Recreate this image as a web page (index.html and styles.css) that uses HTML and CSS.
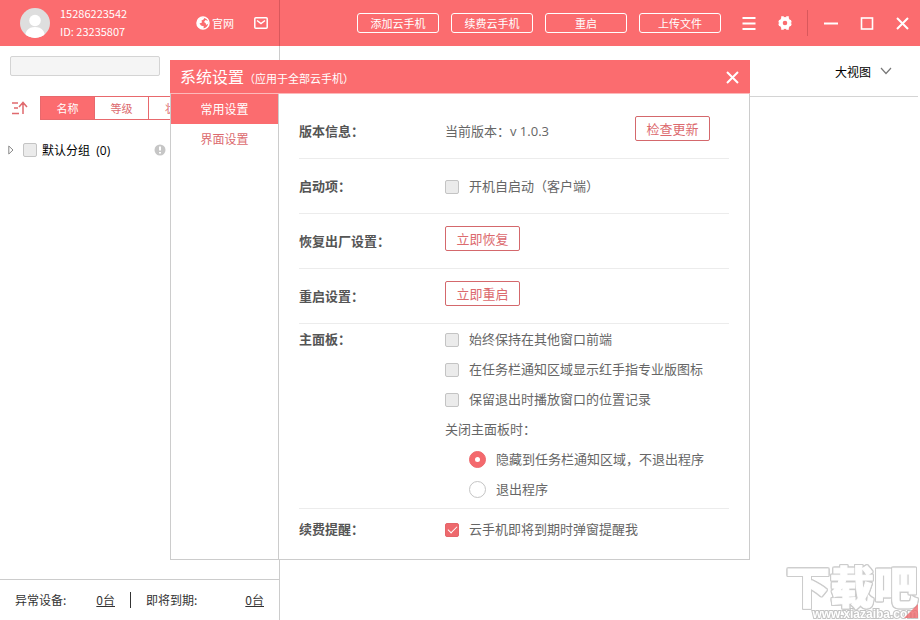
FILE: index.html
```
<!DOCTYPE html>
<html lang="zh-CN">

<head>
  <meta charset="utf-8" />
  <title>系统设置</title>
  <link rel="stylesheet" href="styles.css">
</head>

<body class="app">
  <!-- 顶部栏 -->
  <header class="topbar">
    <div class="account">
      <svg class="avatar" viewBox="0 0 30 30">
        <clipPath id="avatarClip"><circle cx="15" cy="15" r="15" /></clipPath>
        <g clip-path="url(#avatarClip)">
          <rect width="30" height="30" fill="#dedede" />
          <circle cx="15" cy="12.500" r="5.800" fill="#fff" />
          <path d="M5 30c0-7 3-11 10-11s10 4 10 11z" fill="#fff" />
        </g>
      </svg>
      <div class="account_info">
        <div>15286223542</div>
        <div>ID: 23235807</div>
      </div>
      <a class="site_link" href="#">
        <svg width="14" height="14" viewBox="0 0 14 14">
          <circle cx="7" cy="7" r="6" fill="none" stroke="#fff" stroke-width="1.500" />
          <path d="M1.500 5C3 2 6 1 8.500 1.500L7.500 3.500 5.500 4.500 6 6.500 3.500 7.500 5 9.500 8 10.500 7 13 3.500 12C1 10 .5 7.500 1.500 5zM9.500 4l2.500 1 .5 2.500-2 1.500-1-2-1.500-1z" fill="#fff" />
        </svg>
        官网
      </a>
      <button class="icon_btn" aria-label="消息">
        <svg width="14" height="14" viewBox="0 0 14 14" fill="none" stroke="#fff" stroke-width="1.500">
          <rect x=".8" y="1.800" width="12.400" height="10.400" rx="1" />
          <path d="M3 4.500l4 3 4-3" />
        </svg>
      </button>
    </div>

    <div class="actions">
      <button class="top_btn">添加云手机</button>
      <button class="top_btn">续费云手机</button>
      <button class="top_btn">重启</button>
      <button class="top_btn">上传文件</button>
    </div>

    <div class="tools">
      <button class="icon_btn" aria-label="菜单">
        <svg width="14" height="14" viewBox="0 0 14 14" stroke="#fff" stroke-width="2">
          <path d="M.5 2h13M.5 7.500h13M.5 13h13" />
        </svg>
      </button>
      <button class="icon_btn" aria-label="设置">
        <svg width="14" height="14" viewBox="0 0 14 14">
          <circle cx="7" cy="7" r="4.100" fill="none" stroke="#fff" stroke-width="3.600" />
          <path d="M4.500.2v3M9.500.2v3M4.500 10.800v3M9.500 10.800v3M.7 5l2.600 1M.7 9l2.600-1M13.300 5l-2.600 1M13.300 9l-2.600-1" stroke="#fff" stroke-width="2.600" />
        </svg>
      </button>
    </div>
    <div class="window_btns">
      <button class="icon_btn" aria-label="最小化">
        <svg width="14" height="14" viewBox="0 0 14 14"><path d="M0 7.500h14" stroke="#fff" stroke-width="2" /></svg>
      </button>
      <button class="icon_btn" aria-label="最大化">
        <svg width="14" height="14" viewBox="0 0 14 14"><rect x="1.500" y="2" width="11" height="11" fill="none" stroke="#fff" stroke-width="1.600" /></svg>
      </button>
      <button class="icon_btn" aria-label="关闭">
        <svg width="14" height="14" viewBox="0 0 14 14"><path d="M1 2l11 11M12 2l-11 11" stroke="#fff" stroke-width="2" /></svg>
      </button>
    </div>
  </header>

  <div class="content">
    <!-- 左侧设备列表 -->
    <aside class="sidebar">
      <input class="search" type="text" aria-label="搜索">
      <div class="sort_bar">
        <button class="icon_btn" aria-label="排序">
          <svg width="18" height="14" viewBox="0 0 18 14" fill="none" stroke="#e06a6e" stroke-width="1.500">
            <path d="M2 2h6M4 7h4M2 12.500h7M13 13V2M9 6l4-4.500 4 4.500" />
          </svg>
        </button>
        <div class="tabs">
          <button class="tab tab_active">名称</button>
          <button class="tab">等级</button>
          <button class="tab">状态</button>
        </div>
      </div>
      <div class="group">
        <svg width="6" height="10" viewBox="0 0 6 10"><path d="M.8 1v8l4.200-4z" fill="#fff" stroke="#888" /></svg>
        <label class="check group_name"><input type="checkbox"> 默认分组&nbsp; (0)</label>
        <svg class="group_tip" width="12" height="12" viewBox="0 0 12 12">
          <circle cx="6" cy="6" r="5.500" fill="#c6c6c6" />
          <path d="M6 2.500v4M6 8v1.600" stroke="#fff" stroke-width="2" />
        </svg>
      </div>
      <div class="status">
        <div class="status_item status_error">异常设备: <a href="#">0台</a></div>
        <div class="status_item status_expire">即将到期: <a href="#">0台</a></div>
      </div>
    </aside>

    <main class="main">
      <div class="view_bar">
        <select class="view_select" aria-label="视图">
          <option>大视图</option>
        </select>
        <svg width="12" height="8" viewBox="0 0 12 8"><path d="M1 1l5 5.500L11 1" fill="none" stroke="#777" stroke-width="1.200" /></svg>
      </div>
    </main>
  </div>

  <div class="watermark">
    <div class="watermark_name">下载吧</div>
    <div class="watermark_url">www.xiazaiba.com</div>
  </div>

  <!-- 系统设置 -->
  <div class="overlay">
    <section class="dialog" role="dialog" aria-labelledby="dialogTitle">
      <div class="dialog_head">
        <h1 class="dialog_title" id="dialogTitle">系统设置<small>（应用于全部云手机）</small></h1>
        <button class="icon_btn" aria-label="关闭设置">
          <svg width="14" height="14" viewBox="0 0 14 14"><path d="M1 2l11 11M12 2l-11 11" stroke="#fff" stroke-width="2" /></svg>
        </button>
      </div>
      <div class="dialog_body">
        <nav class="dialog_nav">
          <a class="nav_item nav_active" href="#">常用设置</a>
          <a class="nav_item" href="#">界面设置</a>
        </nav>
        <div class="settings">
          <div class="row">
            <h2 class="row_label">版本信息：</h2>
            <div class="row_value version">
              <span>当前版本：v 1.0.3</span>
              <button class="btn">检查更新</button>
            </div>
          </div>
          <div class="row">
            <h2 class="row_label">启动项：</h2>
            <div class="row_value">
              <label class="check"><input type="checkbox"> 开机自启动（客户端）</label>
            </div>
          </div>
          <div class="row">
            <h2 class="row_label">恢复出厂设置：</h2>
            <div class="row_value"><button class="btn">立即恢复</button></div>
          </div>
          <div class="row">
            <h2 class="row_label">重启设置：</h2>
            <div class="row_value"><button class="btn">立即重启</button></div>
          </div>
          <div class="row row_panel">
            <h2 class="row_label">主面板：</h2>
            <div class="row_value">
              <label class="check"><input type="checkbox"> 始终保持在其他窗口前端</label>
              <label class="check"><input type="checkbox"> 在任务栏通知区域显示红手指专业版图标</label>
              <label class="check"><input type="checkbox"> 保留退出时播放窗口的位置记录</label>
              <div>关闭主面板时：</div>
              <label class="check check_sub"><input type="radio" name="closeMode" checked> 隐藏到任务栏通知区域，不退出程序</label>
              <label class="check check_sub"><input type="radio" name="closeMode"> 退出程序</label>
            </div>
          </div>
          <div class="row row_last">
            <h2 class="row_label">续费提醒：</h2>
            <div class="row_value">
              <label class="check"><input type="checkbox" checked> 云手机即将到期时弹窗提醒我</label>
            </div>
          </div>
        </div>
      </div>
    </section>
  </div>
</body>

</html>
```
FILE: styles.css
```
* {
  box-sizing: border-box;
}

.app {
  display: flex;
  flex-direction: column;
  min-height: 100vh;
  margin: 0;
  background-color: #ffffff;
  color: #333333;
  font-family: "Noto Sans CJK SC", sans-serif;
  font-size: 12px;
}

button,
input,
select {
  margin: 0;
  font-family: inherit;
}

button {
  padding: 0;
  cursor: pointer;
}

svg {
  display: block;
  flex: none;
}

.icon_btn {
  border: 0;
  background: none;
}

/* 顶部栏 */
.topbar {
  display: flex;
  align-items: center;
  height: 46px;
  background-color: #fb6c6f;
  color: #ffffff;
}

.account {
  display: flex;
  align-items: center;
  width: 280px;
  height: 100%;
  padding: 0 11px 0 20px;
  border-right: 1px solid #d9585c;
}

.avatar {
  width: 30px;
  height: 30px;
  margin-right: 10px;
}

.account_info {
  padding-bottom: 2px;
  font-size: 11px;
  line-height: 18px;
}

.site_link {
  display: flex;
  align-items: center;
  gap: 2px;
  margin-left: auto;
  margin-right: 20px;
  color: #ffffff;
  font-size: 11px;
  text-decoration: none;
}

.actions {
  display: flex;
  gap: 12px;
  margin-left: auto;
}

.top_btn {
  width: 82px;
  height: 20px;
  border: 1px solid #ffffff;
  border-radius: 3px;
  background: none;
  color: #ffffff;
  font-size: 11px;
  line-height: 18px;
}

.tools {
  display: flex;
  gap: 22px;
  padding: 6px 15px 6px 21px;
}

.window_btns {
  display: flex;
  align-items: center;
  gap: 22px;
  height: 26px;
  padding: 0 10px 0 16px;
  border-left: 1px solid #d9585c;
}

.content {
  display: flex;
  flex: 1;
}

/* 左侧列表 */
.sidebar {
  display: flex;
  flex-direction: column;
  width: 280px;
  border-right: 1px solid #cccccc;
}

.search {
  width: 150px;
  height: 20px;
  margin: 10px 10px 20px;
  padding: 0 5px;
  border: 1px solid #d4d4d4;
  border-radius: 2px;
  background-color: #f5f5f5;
}

.sort_bar {
  display: flex;
  align-items: center;
  gap: 12px;
  padding-left: 10px;
}

.tabs {
  display: flex;
  border: 1px solid #e8696d;
}

.tab {
  width: 54px;
  height: 22px;
  border: 0;
  border-right: 1px solid #e8696d;
  background-color: #ffffff;
  color: #dc6a6e;
  font-size: 11px;
}

.tab:last-child {
  border-right: 0;
}

.tab_active {
  background-color: #fb6c6f;
  color: #ffffff;
}

.group {
  display: flex;
  align-items: center;
  width: 166px;
  height: 30px;
  margin-top: 15px;
  padding-left: 8px;
}

.group_name {
  margin-left: 9px;
  color: #000000;
  font-family: "Open Sans", "Noto Sans CJK SC", sans-serif;
  font-size: 12px;
}

.group_name input {
  margin-right: -5px;
}

.group_tip {
  margin-left: auto;
}

.status {
  display: flex;
  align-items: center;
  height: 41px;
  margin-top: auto;
  border-top: 1px solid #cccccc;
}

.status_item {
  display: flex;
  justify-content: space-between;
  padding: 0 15px;
  line-height: 16px;
}

.status_item a {
  color: inherit;
}

.status_error {
  width: 131px;
  border-right: 1px solid #333333;
}

.status_expire {
  flex: 1;
}

/* 右侧 */
.main {
  flex: 1;
}

.view_bar {
  display: flex;
  align-items: center;
  justify-content: flex-end;
  gap: 8px;
  height: 51px;
  margin-right: 2px;
  padding-right: 26px;
  border-bottom: 1px solid #d4d4d4;
}

.view_select {
  appearance: none;
  padding: 0;
  border: 0;
  background: none;
  color: #000000;
  font-size: 12px;
}

/* 选项 */
.check {
  display: flex;
  align-items: center;
  gap: 10px;
}

.check input {
  appearance: none;
  display: grid;
  place-items: center;
  flex: none;
  width: 14px;
  height: 14px;
  border: 1px solid #c4c4c4;
  border-radius: 2px;
  background-color: #ebebeb;
}

.check input[type="checkbox"]:checked {
  border-color: #e4656a;
  background-color: #ee696d;
}

.check input[type="checkbox"]:checked::before {
  content: "";
  width: 8px;
  height: 4px;
  margin-bottom: 3px;
  border-left: 1px solid #ffffff;
  border-bottom: 1px solid #ffffff;
  transform: rotate(-45deg);
}

.check input[type="radio"] {
  width: 17px;
  height: 17px;
  border-radius: 50%;
  background-color: #ffffff;
}

.check input[type="radio"]:checked {
  border-color: #ee696d;
  background-color: #f4696d;
}

.check input[type="radio"]:checked::before {
  content: "";
  width: 5px;
  height: 5px;
  border-radius: 50%;
  background-color: #ffffff;
}

.check_sub {
  margin-left: 24px;
}

/* 设置窗口 */
.overlay {
  position: fixed;
  inset: 0;
  display: flex;
  align-items: center;
  justify-content: center;
}

.dialog {
  width: 580px;
  max-width: 100%;
  background-color: #ffffff;
}

.dialog_head {
  display: flex;
  align-items: center;
  justify-content: space-between;
  height: 33px;
  padding: 0 10px;
  background-color: #fb6c6f;
  color: #ffffff;
}

.dialog_title {
  margin: 0;
  font-size: 16px;
  font-weight: normal;
  line-height: 32px;
}

.dialog_title small {
  font-size: 11px;
}

.dialog_body {
  display: flex;
  border: 1px solid #cccccc;
  border-top-color: #fdb9ba;
}

.dialog_nav {
  width: 108px;
  border-right: 1px solid #cccccc;
}

.nav_item {
  display: block;
  color: #dc6a6e;
  line-height: 30px;
  text-align: center;
  text-decoration: none;
}

.nav_active {
  background-color: #fb6c6f;
  color: #ffffff;
}

.settings {
  flex: 1;
  padding: 10px 20px 0;
  color: #666666;
  font-family: "Open Sans", "Noto Sans CJK SC", sans-serif;
  font-size: 13px;
}

.settings .check input[type="checkbox"] {
  margin-top: 2px;
}

.row {
  display: flex;
  align-items: center;
  min-height: 55px;
  padding-bottom: 1px;
  border-bottom: 1px solid #ececec;
  line-height: 20px;
}

.row_label {
  width: 146px;
  margin: 0;
  color: #555555;
  font-size: 13px;
  font-weight: bold;
}

.row_value {
  flex: 1;
}

.version {
  display: flex;
  align-items: center;
  justify-content: space-between;
  padding-right: 19px;
}

.btn {
  display: block;
  width: 75px;
  height: 25px;
  margin-bottom: 4px;
  border: 1px solid #d4686c;
  border-radius: 2px;
  background-color: #ffffff;
  color: #dc6a6e;
  font-size: 13px;
  line-height: 22px;
}

.row_panel {
  align-items: flex-start;
  padding-bottom: 4px;
  line-height: 30px;
}

.row_last {
  min-height: 50px;
  padding-bottom: 10px;
  border-bottom: 0;
}

/* 右下角水印 */
.watermark {
  position: fixed;
  right: 2px;
  bottom: 0;
  color: #ffffff;
  text-align: right;
}

.watermark::after {
  content: "";
  position: absolute;
  right: 0;
  bottom: 2px;
  border-left: 14px solid transparent;
  border-bottom: 14px solid #ee696d;
  opacity: 0.8;
}

.watermark_name {
  font-size: 44px;
  font-weight: 900;
  line-height: 46px;
  -webkit-text-stroke: 1px #ffffff;
  filter: drop-shadow(1px 0 #cccccc) drop-shadow(-1px 0 #cccccc) drop-shadow(0 1px #cccccc) drop-shadow(0 -1px #cccccc);
}

.watermark_url {
  position: relative;
  font-family: "Liberation Sans", sans-serif;
  font-size: 12px;
  font-weight: bold;
  line-height: 12px;
  -webkit-text-stroke: 2px #c4c4c4;
  paint-order: stroke fill;
}
```
